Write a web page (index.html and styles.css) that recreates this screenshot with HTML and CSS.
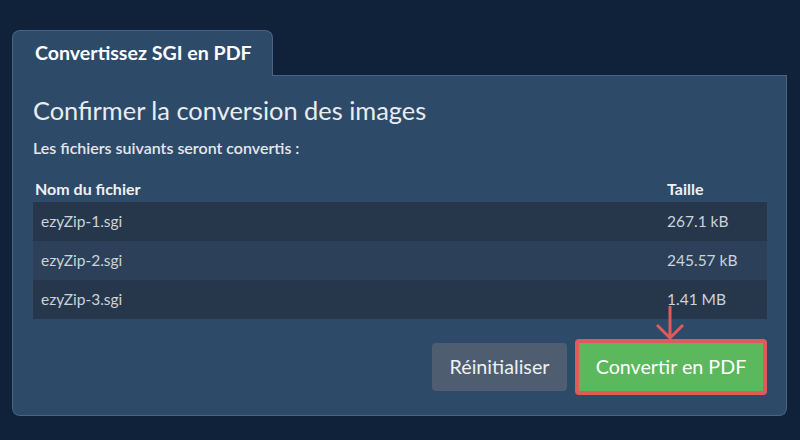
FILE: index.html
```html
<!DOCTYPE html>
<html lang="fr">
<head>
<meta charset="utf-8">
<title>Convertissez SGI en PDF</title>
<link rel="stylesheet" href="styles.css">
</head>
<body>
<div class="card">
  <div class="tabs">
    <div class="tab">Convertissez SGI en PDF</div>
    <div class="tab-fill"></div>
  </div>
  <div class="panel">
    <h1 class="title">Confirmer la conversion des images</h1>
    <p class="subtitle">Les fichiers suivants seront convertis :</p>
    <table class="files">
      <thead>
        <tr><th class="c-name">Nom du fichier</th><th class="c-size">Taille</th></tr>
      </thead>
      <tbody>
        <tr><td class="c-name">ezyZip-1.sgi</td><td class="c-size">267.1 kB</td></tr>
        <tr><td class="c-name">ezyZip-2.sgi</td><td class="c-size">245.57 kB</td></tr>
        <tr><td class="c-name">ezyZip-3.sgi</td><td class="c-size">1.41 MB</td></tr>
      </tbody>
    </table>
    <div class="actions">
      <button class="btn btn-reset">Réinitialiser</button>
      <div class="highlight">
        <svg class="arrow" width="30" height="36" viewBox="0 0 30 36" aria-hidden="true">
          <path d="M15 1 V33 M2 20 L15 33 L28 20" fill="none" stroke="#e05a57" stroke-width="3"/>
        </svg>
        <button class="btn btn-convert">Convertir en PDF</button>
      </div>
    </div>
  </div>
</div>
</body>
</html>
```
FILE: styles.css
```css
html, body {
  margin: 0;
  padding: 0;
  background: #10223a;
  font-family: Lato, "Open Sans", sans-serif;
}
body {
  width: 800px;
  height: 440px;
  overflow: hidden;
}
.card {
  margin: 30px 13px 0 12px;
}
.tabs {
  display: flex;
}
.tab {
  box-sizing: border-box;
  width: 261px;
  height: 46px;
  line-height: 44px;
  padding-left: 22px;
  background: #2d4a69;
  border: 1px solid #4a6483;
  border-bottom: none;
  border-radius: 8px 8px 0 0;
  color: #ffffff;
  font-weight: 700;
  font-size: 19.6px;
}
.tab-fill {
  flex: 1;
  border-bottom: 1px solid #4a6483;
}
.panel {
  background: #2d4a69;
  border: 1px solid #4a6483;
  border-top: none;
  border-radius: 0 0 8px 8px;
  padding: 19px 19px 20px 20px;
}
.title {
  margin: 0;
  font-size: 25.4px;
  font-weight: 400;
  line-height: 1.2;
  color: #e9ecf0;
}
.subtitle {
  margin: 13px 0 0;
  font-size: 16px;
  font-weight: 600;
  line-height: 1.2;
  color: #e3e7ec;
}
.files {
  width: 100%;
  margin-top: 21px;
  border-collapse: collapse;
}
.files th {
  text-align: left;
  font-size: 16px;
  font-weight: 700;
  color: #eef1f4;
  line-height: 1.2;
  padding: 0 0 4px;
}
.files th.c-name { padding-left: 2px; }
.files td {
  height: 39px;
  padding: 0;
  font-size: 15.5px;
  color: #cdd3da;
  vertical-align: middle;
}
.files td.c-name { padding-left: 8px; }
.files .c-size { width: 100px; }
.files tbody tr:nth-child(odd) { background: #26374c; }
.files tbody tr:nth-child(even) { background: #2c4159; }
.actions {
  display: flex;
  justify-content: flex-end;
  align-items: center;
  gap: 8px;
  margin-top: 20px;
}
.btn {
  font-family: inherit;
  font-size: 19.7px;
  border: none;
  border-radius: 4px;
  color: #ffffff;
  height: 48px;
  cursor: pointer;
}
.btn-reset {
  background: #4e5e70;
  width: 135px;
  color: #eef0f2;
}
.highlight {
  position: relative;
  border: 4px solid #e05a57;
  border-radius: 4px;
  display: flex;
}
.btn-convert {
  background: #5cb85c;
  width: 184px;
  border-radius: 0;
}
.arrow {
  position: absolute;
  left: 50%;
  bottom: 100%;
  margin-left: -16px;
  margin-bottom: 2px;
}
```
